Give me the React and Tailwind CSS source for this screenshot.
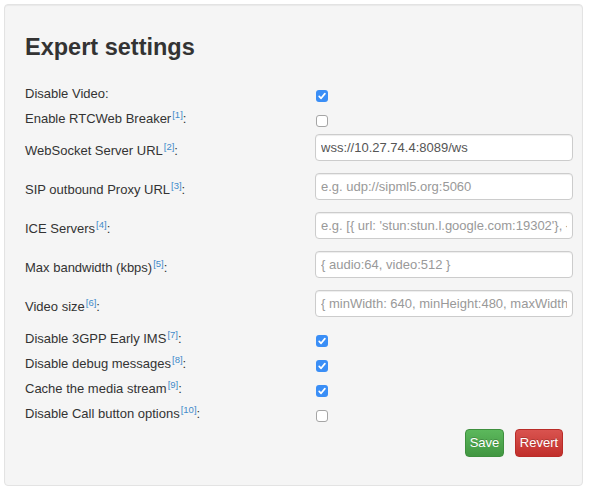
import React from "react";

function Sup({ n }) {
  return <sup className="text-[9.5px] text-[#428bca] ml-[1px]">[{n}]</sup>;
}

function Check({ checked }) {
  if (checked) {
    return (
      <span className="mt-[6px] ml-[1px] flex h-[12px] w-[12px] items-center justify-center rounded-[3px] bg-[#3a8ef6]">
        <svg width="10" height="10" viewBox="0 0 10 10">
          <path d="M2.2 5.3 L4.1 7.3 L7.9 2.6" fill="none" stroke="white" strokeWidth="1.7" strokeLinecap="round" strokeLinejoin="round" />
        </svg>
      </span>
    );
  }
  return <span className="mt-[6px] ml-[1px] block h-[12px] w-[12px] rounded-[3px] border border-[#a5a5a5] bg-white" />;
}

function CheckRow({ label, sup, checked }) {
  return (
    <div className="flex h-[25px] items-start">
      <div className="w-[290px] leading-[20px] text-[#333]">
        {label}
        {sup && <Sup n={sup} />}:
      </div>
      <Check checked={checked} />
    </div>
  );
}

function InputRow({ label, sup, value, placeholder }) {
  return (
    <div className="flex h-[39px] items-start">
      <div className="w-[290px] pt-[7px] leading-[19px] text-[#333]">
        {label}
        {sup && <Sup n={sup} />}:
      </div>
      <input
        className="h-[27px] w-[258px] rounded-[4px] border border-[#cccccc] bg-white px-[5px] text-[13px] text-[#555] shadow-[inset_0_1px_1px_rgba(0,0,0,0.075)] outline-none placeholder:text-[#999]"
        defaultValue={value}
        placeholder={placeholder}
      />
    </div>
  );
}

export default function App() {
  return (
    <div className="min-h-[496px] bg-white p-[4px] font-['Liberation_Sans',Arial,sans-serif] text-[13px]">
      <div className="w-[579px] rounded-[4px] border border-[#e3e3e3] bg-[#f5f5f5] pt-[29px] pr-[9px] pb-[28px] pl-[20px] shadow-[inset_0_1px_1px_rgba(0,0,0,0.05)]">
        <h2 className="mb-[24px] text-[23.5px] font-bold leading-[26px] text-[#333]">Expert settings</h2>
        <CheckRow label="Disable Video" checked />
        <CheckRow label="Enable RTCWeb Breaker" sup="1" />
        <InputRow label="WebSocket Server URL" sup="2" value="wss://10.27.74.4:8089/ws" />
        <InputRow label="SIP outbound Proxy URL" sup="3" placeholder="e.g. udp://sipml5.org:5060" />
        <InputRow label="ICE Servers" sup="4" placeholder="e.g. [{ url: 'stun:stun.l.google.com:19302'}, { url:'turn:user@numb.viagenie.ca', credential:'myPassword'}]" />
        <InputRow label="Max bandwidth (kbps)" sup="5" placeholder="{ audio:64, video:512 }" />
        <InputRow label="Video size" sup="6" placeholder="{ minWidth: 640, minHeight:480, maxWidth: 640, maxHeight:480 }" />
        <CheckRow label="Disable 3GPP Early IMS" sup="7" checked />
        <CheckRow label="Disable debug messages" sup="8" checked />
        <CheckRow label="Cache the media stream" sup="9" checked />
        <CheckRow label="Disable Call button options" sup="10" />
        <div className="flex justify-end gap-[11px] pr-[10px]">
          <button className="flex h-[28px] w-[39px] items-center justify-center rounded-[4px] border border-[#3e8f3e] bg-linear-to-b from-[#5cb85c] to-[#419641] text-[13px] text-white [text-shadow:0_-1px_0_rgba(0,0,0,0.2)]">
            Save
          </button>
          <button className="flex h-[28px] w-[48px] items-center justify-center rounded-[4px] border border-[#b92c28] bg-linear-to-b from-[#d9534f] to-[#c12e2a] text-[13px] text-white [text-shadow:0_-1px_0_rgba(0,0,0,0.2)]">
            Revert
          </button>
        </div>
      </div>
    </div>
  );
}
